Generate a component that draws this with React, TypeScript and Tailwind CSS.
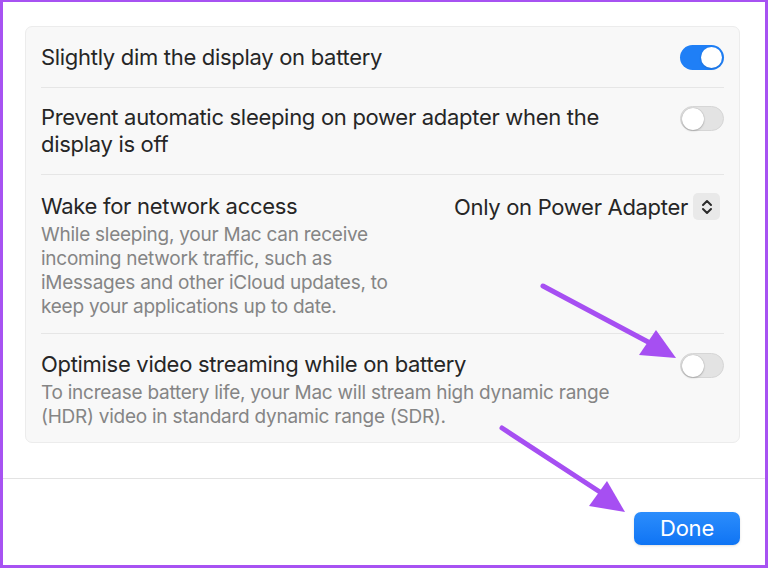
import React from "react";

const font = { fontFamily: "Inter, 'Noto Sans', 'Liberation Sans', sans-serif" };

function Toggle({ on }: { on?: boolean }) {
  return on ? (
    <div className="w-[44px] h-[25px] rounded-full bg-[#1f7ff6] flex items-center justify-end pr-[2px] shrink-0">
      <div className="w-[21px] h-[21px] rounded-full bg-white shadow-sm" />
    </div>
  ) : (
    <div className="w-[44px] h-[25px] rounded-full bg-[#e3e3e3] flex items-center pl-[1px] shrink-0 border border-[#d6d6d6]">
      <div className="w-[22px] h-[22px] rounded-full bg-white shadow-[0_0_1px_rgba(0,0,0,0.35),0_1px_2px_rgba(0,0,0,0.2)]" />
    </div>
  );
}

export default function App() {
  return (
    <div
      className="relative w-[768px] h-[568px] bg-white border-[3px] border-t-2 border-[#a752f2] flex flex-col overflow-hidden"
      style={font}
    >
      <div className="mt-[24px] ml-[22px] mr-[25px] rounded-[7px] bg-[#f8f8f8] border border-[#ececec] px-[15px] text-[#262626]">
        {/* Row 1 */}
        <div className="flex items-center justify-between pt-[17px] pb-[17px] border-b border-[#e6e6e6]">
          <div className="text-[22px] leading-[26px] tracking-[-0.3px]">Slightly dim the display on battery</div>
          <Toggle on />
        </div>
        {/* Row 2 */}
        <div className="flex items-start justify-between pt-[16px] pb-[16px] border-b border-[#e6e6e6]">
          <div className="text-[22px] leading-[27px] tracking-[-0.3px]">
            Prevent automatic sleeping on power adapter when the
            <br />
            display is off
          </div>
          <div className="pt-[2px]">
            <Toggle />
          </div>
        </div>
        {/* Row 3 */}
        <div className="flex items-start justify-between pt-[18px] pb-[14px] border-b border-[#e6e6e6]">
          <div>
            <div className="text-[22px] leading-[26px] tracking-[-0.3px]">Wake for network access</div>
            <div className="mt-[4px] text-[19px] leading-[24px] text-[#858585] tracking-[-0.25px]">
              While sleeping, your Mac can receive
              <br />
              incoming network traffic, such as
              <br />
              iMessages and other iCloud updates, to
              <br />
              keep your applications up to date.
            </div>
          </div>
          <div className="flex items-center gap-[5px] pt-[0px] mr-[4px]">
            <span className="text-[22px] leading-[26px] tracking-[-0.3px]">Only on Power Adapter</span>
            <div className="w-[27px] h-[27px] rounded-[5px] bg-[#e9e9e9] flex items-center justify-center">
              <svg width="12" height="18" viewBox="0 0 12 18" fill="none" stroke="#2a2a2a" strokeWidth="2" strokeLinecap="round" strokeLinejoin="round">
                <path d="M2 7 L6 3 L10 7" />
                <path d="M2 11 L6 15 L10 11" />
              </svg>
            </div>
          </div>
        </div>
        {/* Row 4 */}
        <div className="flex items-start justify-between pt-[17px] pb-[13px]">
          <div>
            <div className="text-[22px] leading-[26px] tracking-[-0.3px]">Optimise video streaming while on battery</div>
            <div className="mt-[4px] text-[19px] leading-[24px] text-[#858585] tracking-[-0.25px]">
              To increase battery life, your Mac will stream high dynamic range
              <br />
              (HDR) video in standard dynamic range (SDR).
            </div>
          </div>
          <div className="pt-[2px]">
            <Toggle />
          </div>
        </div>
      </div>

      <div className="mt-[35px] border-t border-[#e3e3e3]" />

      <div className="flex justify-end mt-[33px] mr-[25px]">
        <button className="w-[106px] h-[33px] rounded-[7px] bg-gradient-to-b from-[#2b8dfc] to-[#0e74f4] text-white text-[22px] leading-[33px] tracking-[-0.2px] shadow-sm">
          Done
        </button>
      </div>

      <svg className="absolute left-[-3px] top-[-2px] pointer-events-none" width="768" height="568">
        <line x1="543" y1="286" x2="650" y2="343" stroke="#a64ff2" strokeWidth="5" strokeLinecap="round" />
        <polygon points="676,358 639,355 656,330" fill="#a64ff2" />
        <line x1="502" y1="428" x2="603" y2="494" stroke="#a64ff2" strokeWidth="5" strokeLinecap="round" />
        <polygon points="625,512 589,506 607,481" fill="#a64ff2" />
      </svg>
    </div>
  );
}
